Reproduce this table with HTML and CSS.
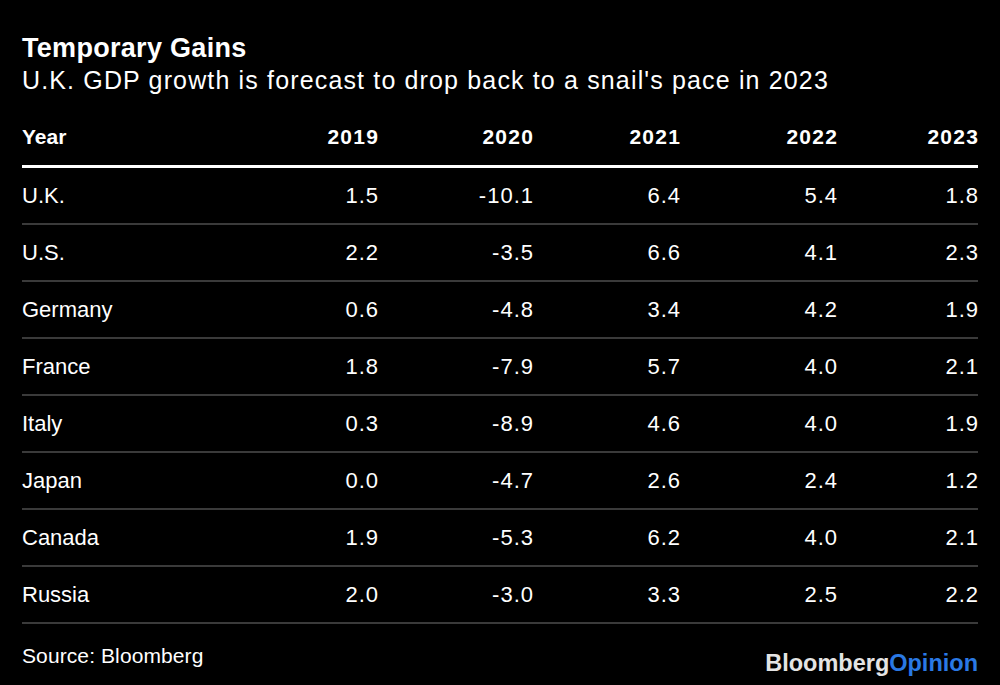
FILE: index.html
```html
<!DOCTYPE html>
<html>
<head>
<meta charset="utf-8">
<link rel="stylesheet" href="styles.css">
</head>
<body>
<div class="chart">
  <h1 class="title">Temporary Gains</h1>
  <p class="subtitle">U.K. GDP growth is forecast to drop back to a snail's pace in 2023</p>
  <div class="table">
    <div class="row head">
      <div class="name">Year</div>
      <div class="num">2019</div>
      <div class="num">2020</div>
      <div class="num">2021</div>
      <div class="num">2022</div>
      <div class="num">2023</div>
    </div>
    <div class="row"><div class="name">U.K.</div><div class="num">1.5</div><div class="num">-10.1</div><div class="num">6.4</div><div class="num">5.4</div><div class="num">1.8</div></div>
    <div class="row"><div class="name">U.S.</div><div class="num">2.2</div><div class="num">-3.5</div><div class="num">6.6</div><div class="num">4.1</div><div class="num">2.3</div></div>
    <div class="row"><div class="name">Germany</div><div class="num">0.6</div><div class="num">-4.8</div><div class="num">3.4</div><div class="num">4.2</div><div class="num">1.9</div></div>
    <div class="row"><div class="name">France</div><div class="num">1.8</div><div class="num">-7.9</div><div class="num">5.7</div><div class="num">4.0</div><div class="num">2.1</div></div>
    <div class="row"><div class="name">Italy</div><div class="num">0.3</div><div class="num">-8.9</div><div class="num">4.6</div><div class="num">4.0</div><div class="num">1.9</div></div>
    <div class="row"><div class="name">Japan</div><div class="num">0.0</div><div class="num">-4.7</div><div class="num">2.6</div><div class="num">2.4</div><div class="num">1.2</div></div>
    <div class="row"><div class="name">Canada</div><div class="num">1.9</div><div class="num">-5.3</div><div class="num">6.2</div><div class="num">4.0</div><div class="num">2.1</div></div>
    <div class="row"><div class="name">Russia</div><div class="num">2.0</div><div class="num">-3.0</div><div class="num">3.3</div><div class="num">2.5</div><div class="num">2.2</div></div>
  </div>
  <div class="footer">
    <div class="source">Source: Bloomberg</div>
    <div class="logo"><span class="bb">Bloomberg</span><span class="op">Opinion</span></div>
  </div>
</div>
</body>
</html>
```

FILE: styles.css
```css
html, body {
  margin: 0;
  padding: 0;
  background: #000;
}
body {
  width: 1000px;
  height: 685px;
  overflow: hidden;
  font-family: "Liberation Sans", Arial, sans-serif;
  color: #fff;
}
.chart {
  padding: 33px 22px 0 22px;
}
.title {
  margin: 0;
  font-size: 27px;
  line-height: 31px;
  font-weight: 700;
  letter-spacing: 0.3px;
}
.subtitle {
  margin: 1px 0 0 0;
  font-size: 25px;
  line-height: 30px;
  letter-spacing: 1.15px;
}
.table {
  margin-top: 30px;
}
.row {
  display: grid;
  grid-template-columns: 1fr 155px 155px 147px 157px 141px;
  align-items: center;
  height: 57px;
  box-sizing: border-box;
  border-bottom: 2px solid #3a3a3a;
  font-size: 22px;
}
.row.head {
  height: auto;
  align-items: end;
  padding-bottom: 16px;
  border-bottom: 3px solid #fff;
  font-size: 21px;
  line-height: 24px;
  font-weight: 700;
}
.num {
  text-align: right;
  letter-spacing: 1px;
  margin-right: -1px;
}
.row.head .num {
  letter-spacing: 1.3px;
  margin-right: -1.3px;
}
.footer {
  display: flex;
  justify-content: space-between;
  align-items: flex-start;
  margin-top: 20px;
}
.source {
  font-size: 21px;
  line-height: 24px;
  letter-spacing: 0.1px;
}
.logo {
  margin-top: 6px;
  font-size: 23.5px;
  line-height: 26px;
  font-weight: 700;
  letter-spacing: 0px;
}
.bb {
  color: #e4e4e4;
}
.op {
  color: #2a79e4;
}
```
